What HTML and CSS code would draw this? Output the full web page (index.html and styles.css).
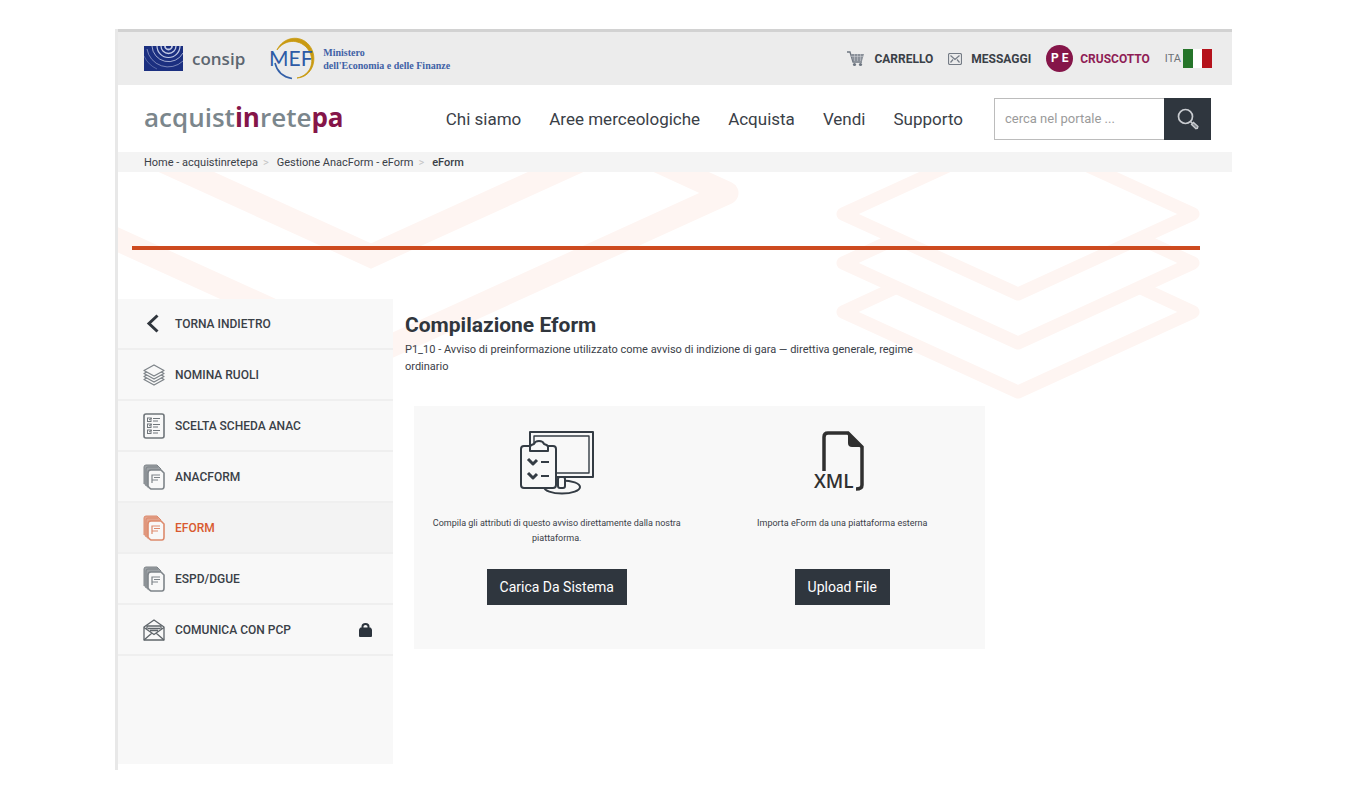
FILE: index.html
```html
<!DOCTYPE html>
<html lang="it">
<head>
    <meta charset="UTF-8">
    <meta name="viewport" content="width=device-width, initial-scale=1.0">
    <title>acquistinretepa - Compilazione Eform</title>
    <link rel="stylesheet" href="styles.css">
</head>
<body>
    <!-- simboli condivisi -->
    <svg class="sprite" width="0" height="0" aria-hidden="true">
        <symbol id="ico-form" viewBox="0 0 22 26">
            <path d="M1 20V3q0-2 2-2h11l4 4v2H8Q5 7 5 10v14z" fill="currentColor" opacity=".75"/>
            <path d="M1 20V3q0-2 2-2h11l4 4M3 22V5q0-2 2-2h10" fill="none" stroke="currentColor"/>
            <path d="M8 6h10l3 3v13q0 3-2 3H8q-2-1-3-3V9q0-3 3-3z" fill="#f8f8f8" stroke="currentColor" stroke-width="1.6"/>
            <path d="M9 19v-8h8M11 13.500h6M9 16h6" fill="none" stroke="currentColor" stroke-width="1.200"/>
        </symbol>
    </svg>

    <div class="page">
        <div class="topbar">
            <div class="brands">
                <a href="#" class="consip">
                    <svg width="39" height="25" viewBox="0 0 39 25" aria-hidden="true">
                        <rect width="39" height="25" fill="#1b2f80"/>
                        <g fill="none" stroke="#c3cbe6">
                            <path d="M21 0a3.500 3.500 0 0 0 7 0" stroke-width="1.800"/>
                            <path d="M17 0a7.500 7.500 0 0 0 15 0" stroke-width="1.300"/>
                            <path d="M13 0a11.500 11.500 0 0 0 23 0" stroke-width="1.200"/>
                            <path d="M8 0a16.500 16.500 0 0 0 31 7" stroke-width="1" opacity=".8"/>
                            <path d="M3 3a21.500 21.500 0 0 0 36 12" stroke-width=".8" opacity=".7"/>
                            <path d="M0 10a26 26 0 0 0 13 13" stroke-width=".7" opacity=".5"/>
                        </g>
                    </svg>
                    <span>consip</span>
                </a>
                <a href="#" class="mef">
                    <svg width="48" height="44" viewBox="0 0 48 44" aria-hidden="true">
                        <path d="M8 13C14 0 31-3 40 8c10 12 4 32-12 33 15-3 19-19 10-30C29 1 15 3 8 13z" fill="#c99a12" stroke="#c99a12" stroke-width=".8"/>
                        <path d="M6 26q3 13 17 15.500" fill="none" stroke="#3460a8" stroke-width="1.600"/>
                        <text x="0" y="29" class="mef-text">MEF</text>
                    </svg>
                    <span>Ministero<br>dell'Economia e delle Finanze</span>
                </a>
            </div>
            <div class="tools">
                <a href="#">
                    <svg width="18" height="16" viewBox="0 0 18 16" aria-hidden="true">
                        <path d="M0 1h3l3 10h9" fill="none" stroke="#6d7580" stroke-width="1.300"/>
                        <path d="M4 3h13l-2 7H6z" fill="#8b919a"/>
                        <path d="M7.500 3v7M10.500 3v7M13.500 3v7M4 5.500h12" stroke="#d0d3d8" stroke-width=".5"/>
                        <circle cx="7.500" cy="13.500" r="1.600" fill="#6d7580"/>
                        <circle cx="13.500" cy="13.500" r="1.600" fill="#6d7580"/>
                    </svg>
                    CARRELLO
                </a>
                <a href="#">
                    <svg width="14" height="12" viewBox="0 0 14 12" aria-hidden="true">
                        <g fill="none" stroke="#757c86" stroke-width="1.200">
                            <rect x=".5" y=".5" width="13" height="11" rx="1.500"/>
                            <path d="M2.500 2.500L7 6.500l4.500-4M2.500 9.500l2.500-3M11.500 9.500L9 6.500"/>
                        </g>
                    </svg>
                    MESSAGGI
                </a>
                <a href="#" class="user"><span class="avatar">P E</span> CRUSCOTTO</a>
                <a href="#" class="lang">ITA
                    <svg width="29" height="19" viewBox="0 0 29 19" aria-hidden="true">
                        <rect width="29" height="19" fill="#fff"/>
                        <rect width="10" height="19" fill="#26752a"/>
                        <rect x="19" width="10" height="19" fill="#b5131c"/>
                    </svg>
                </a>
            </div>
        </div>

        <header class="header">
            <a href="#" class="logo">acquist<b>in</b>rete<b>pa</b></a>
            <nav class="nav">
                <a href="#">Chi siamo</a>
                <a href="#">Aree merceologiche</a>
                <a href="#">Acquista</a>
                <a href="#">Vendi</a>
                <a href="#">Supporto</a>
            </nav>
            <form class="search">
                <input type="text" placeholder="cerca nel portale ..." aria-label="cerca nel portale">
                <button type="button" aria-label="Cerca">
                    <svg width="24" height="24" viewBox="0 0 24 24" fill="none" stroke="#c9ccd0" aria-hidden="true">
                        <circle cx="9.500" cy="9.500" r="7" stroke-width="1.700"/>
                        <path d="M14.500 14.500l2 2" stroke-width="1.700"/>
                        <path d="M15.500 17.500l2-2 4.500 4q0 2-2 2.200z" stroke-width="1.300" fill="#858a90"/>
                    </svg>
                </button>
            </form>
        </header>

        <nav class="breadcrumb">
            <a href="#">Home - acquistinretepa</a><i>&gt;</i>
            <a href="#">Gestione AnacForm - eForm</a><i>&gt;</i>
            <span>eForm</span>
        </nav>

        <main class="main">
            <!-- livelli decorativi dietro al contenuto -->
            <svg class="layers" viewBox="0 0 1114 240" preserveAspectRatio="xMinYMin slice" fill="none" stroke="#fef5f2" aria-hidden="true">
                <g stroke-width="23">
                    <path d="M-103 -78L253 84 609 -78"/>
                    <path d="M-103 21L253 183 609 21 500 -29" stroke-linejoin="round"/>
                </g>
                <g stroke-width="13" stroke-linejoin="round">
                    <path d="M900 -38L725 42 900 122 1075 42z"/>
                    <path d="M779 66L725 91 900 171 1075 91 1021 66"/>
                    <path d="M779 115L725 140 900 220 1075 140 1021 115"/>
                </g>
            </svg>

            <hr class="rule">

            <div class="columns">
                <aside class="sidebar">
                    <a href="#">
                        <svg width="22" height="22" viewBox="0 0 22 22" aria-hidden="true"><path d="M14.500 2.500L6 10.500l8.500 8" fill="none" stroke="#30363d" stroke-width="3"/></svg>
                        TORNA INDIETRO
                    </a>
                    <a href="#">
                        <svg width="22" height="22" viewBox="0 0 22 22" fill="#f8f8f8" stroke="#7e8489" stroke-width="1.300" stroke-linejoin="round" aria-hidden="true">
                            <path d="M11 10l10 5.500L11 21 1 15.500z"/>
                            <path d="M11 7l10 5.500L11 18 1 12.500z"/>
                            <path d="M11 4l10 5.500L11 15 1 9.500z"/>
                            <path d="M11 1l10 5.500L11 12 1 6.500z"/>
                        </svg>
                        NOMINA RUOLI
                    </a>
                    <a href="#">
                        <svg width="22" height="26" viewBox="0 0 22 26" fill="none" stroke="#6f757a" aria-hidden="true">
                            <rect x="1" y="1" width="20" height="24" rx="2" stroke-width="1.600"/>
                            <rect x="4.500" y="5" width="3.500" height="3.500"/>
                            <rect x="4.500" y="11" width="3.500" height="3.500"/>
                            <rect x="4.500" y="17" width="3.500" height="3.500"/>
                            <path d="M10 5.500h7M10 8h5M10 11.500h7M10 14h5M10 17.500h7M10 20h5M6 7l3-2M6 13l3-2M6 19l3-2"/>
                        </svg>
                        SCELTA SCHEDA ANAC
                    </a>
                    <a href="#"><svg class="grey" width="22" height="26" aria-hidden="true"><use href="#ico-form"/></svg>ANACFORM</a>
                    <a href="#" class="active"><svg width="22" height="26" aria-hidden="true"><use href="#ico-form"/></svg>EFORM</a>
                    <a href="#"><svg class="grey" width="22" height="26" aria-hidden="true"><use href="#ico-form"/></svg>ESPD/DGUE</a>
                    <a href="#">
                        <svg width="22" height="22" viewBox="0 0 22 22" fill="none" stroke="#5f656a" stroke-width="1.300" stroke-linejoin="round" aria-hidden="true">
                            <path d="M1 8l10-7 10 7v13H1z"/>
                            <path d="M4 10V7h14v3M1 8.500l10 7 10-7M1 21l8-7M21 21l-8-7M5 9.500h12M7 11.500h8"/>
                        </svg>
                        COMUNICA CON PCP
                        <svg class="lock" width="13" height="14" viewBox="0 0 13 14" aria-hidden="true">
                            <path d="M3.500 6V3.500q0-2.500 3-2.500t3 2.500V6" fill="none" stroke="#2c343d" stroke-width="2"/>
                            <path d="M1.500 4.500h10q1.500 1 1.500 2.500v6q0 1-1 1H1q-1 0-1-1V7q0-1.500 1.500-2.500z" fill="#2c343d"/>
                        </svg>
                    </a>
                </aside>

                <section class="content">
                    <h1>Compilazione Eform</h1>
                    <p class="desc">P1_10 - Avviso di preinformazione utilizzato come avviso di indizione di gara — direttiva generale, regime ordinario</p>

                    <div class="options">
                        <div class="option">
                            <svg width="74" height="66" viewBox="0 0 74 66" fill="#f8f8f8" stroke="#343c44" stroke-width="2" stroke-linejoin="round" aria-hidden="true">
                                <ellipse cx="42" cy="57" rx="18" ry="6.500"/>
                                <path d="M10 2h63v45H10z"/>
                                <path d="M14 6h55v37H14z" stroke-width="1.400"/>
                                <rect x="38" y="47" width="7" height="11" rx="2"/>
                                <rect x="1" y="16" width="35" height="42" rx="3"/>
                                <path d="M10 21v-4q0-2 4-3 1-3 5-3t5 3q4 1 4 3v4z"/>
                                <g fill="none">
                                    <path d="M8 29l5 5 4-4M8 43l5 5 4-4" stroke-width="3"/>
                                    <path d="M21 32h8M21 46h8"/>
                                </g>
                            </svg>
                            <p>Compila gli attributi di questo avviso direttamente dalla nostra piattaforma.</p>
                            <button type="button">Carica Da Sistema</button>
                        </div>
                        <div class="option">
                            <svg width="58" height="66" viewBox="0 0 58 66" aria-hidden="true">
                                <path d="M11 41V7q0-4 4-4h20l14 14v38q0 4-6 4" fill="none" stroke="#303030" stroke-width="3.500"/>
                                <path d="M35 2l15 15H39q-4 0-4-4z" fill="#303030"/>
                                <text x="1" y="58" class="xml-text">XML</text>
                            </svg>
                            <p>Importa eForm da una piattaforma esterna</p>
                            <button type="button">Upload File</button>
                        </div>
                    </div>
                </section>
            </div>
        </main>
    </div>
</body>
</html>
```

FILE: styles.css
```css
* {
    box-sizing: border-box;
}

body {
    margin: 0;
    padding: 29px 115px 28px;
    background-color: #fff;
    color: #3a4047;
    font-family: Roboto, "Liberation Sans", sans-serif;
}

a {
    color: inherit;
    text-decoration: none;
}

svg {
    display: block;
    flex: none;
}

.sprite {
    position: absolute;
}

.page {
    border-left: 3px solid #e8e8e8;
}

/* barra superiore */
.topbar {
    display: flex;
    justify-content: space-between;
    align-items: center;
    height: 56px;
    padding: 0 20px 0 26px;
    border-top: 3px solid #d2d2d2;
    background-color: #ececec;
}

.brands,
.brands a,
.tools,
.tools a {
    display: flex;
    align-items: center;
}

.brands {
    gap: 24px;
}

.consip {
    gap: 9px;
    color: #5c6670;
    font-family: "Open Sans", sans-serif;
    font-size: 17px;
    font-weight: 600;
}

.mef {
    gap: 6px;
    color: #3f62a6;
    font-family: "Liberation Serif", serif;
    font-size: 10px;
    font-weight: bold;
    line-height: 13px;
}

.mef-text {
    fill: #2d5aa6;
    font-family: Lato, sans-serif;
    font-size: 21px;
    font-weight: normal;
}

.tools {
    gap: 15px;
    font-size: 12px;
    font-weight: bold;
}

.tools a {
    gap: 9px;
}

.tools .user {
    gap: 7px;
    color: #8f1d55;
}

.avatar {
    width: 27px;
    height: 27px;
    border-radius: 50%;
    background-color: #851549;
    color: #fff;
    line-height: 27px;
    text-align: center;
}

.tools .lang {
    gap: 2px;
    color: #6d7277;
    font-size: 11px;
    font-weight: normal;
}

/* intestazione */
.header {
    display: flex;
    align-items: center;
    height: 67px;
    padding: 0 21px 0 26px;
}

.logo {
    padding-bottom: 4px;
    color: #7b868c;
    font-family: "Open Sans", sans-serif;
    font-size: 26px;
    font-weight: 600;
    line-height: 30px;
}

.logo b {
    color: #851549;
    font-weight: bold;
}

.nav {
    display: flex;
    gap: 28px;
    margin-left: auto;
    font-size: 17px;
}

.search {
    display: flex;
    height: 42px;
    margin-left: 31px;
}

.search input {
    width: 170px;
    padding: 0 10px;
    border: 1px solid #bcbcbc;
    border-right: 0;
    border-radius: 0;
    font-family: inherit;
    font-size: 13px;
}

.search input::placeholder {
    color: #9b9b9b;
}

.search button {
    display: flex;
    justify-content: center;
    align-items: center;
    width: 47px;
    padding: 0;
    border: 0;
    background-color: #2f363e;
}

.breadcrumb {
    display: flex;
    align-items: center;
    height: 20px;
    padding: 0 26px;
    background-color: #f4f4f4;
    font-size: 11px;
}

.breadcrumb i {
    margin: 0 8px 0 5px;
    color: #c4c4c4;
    font-style: normal;
}

.breadcrumb span {
    font-weight: 500;
}

/* corpo */
.main {
    position: relative;
    padding: 74px 0 6px;
}

.layers {
    position: absolute;
    top: 0;
    left: 0;
    z-index: -1;
    width: 100%;
    height: 240px;
}

.rule {
    height: 4px;
    margin: 0 32px 0 14px;
    border: 0;
    background-color: #cd4a1f;
}

.columns {
    display: flex;
    margin-top: 49px;
}

.sidebar {
    flex: none;
    width: 275px;
    min-height: 465px;
    background-color: #f8f8f8;
    font-size: 12px;
    font-weight: 500;
}

.sidebar a {
    display: flex;
    align-items: center;
    gap: 10px;
    height: 51px;
    padding: 0 21px 0 25px;
    border-bottom: 2px solid #efefef;
}

.sidebar .grey {
    color: #7e8489;
}

.sidebar .active {
    background-color: #f3f3f3;
    color: #d9592f;
}

.sidebar .active svg {
    color: #dd8a6c;
}

.sidebar .lock {
    margin-left: auto;
}

.content {
    flex: 1;
    max-width: 592px;
    padding: 13px 0 0 12px;
}

h1 {
    margin: 0;
    color: #30363d;
    font-size: 21px;
    font-weight: bold;
    line-height: 26px;
}

.desc {
    max-width: 530px;
    margin: 3px 0 0;
    font-size: 11px;
    line-height: 17px;
}

.options {
    display: grid;
    grid-template-columns: 1fr 1fr;
    margin: 31px 0 0 9px;
    padding: 24px 0 44px;
    background-color: #f8f8f8;
}

.option {
    display: flex;
    flex-direction: column;
    align-items: center;
    padding: 0 12px;
    text-align: center;
}

.option p {
    min-height: 30px;
    margin: 20px 0 23px;
    font-size: 9px;
    line-height: 15px;
}

.option button {
    height: 36px;
    padding: 0 13px;
    border: 0;
    background-color: #2f363e;
    color: #fff;
    font-family: inherit;
    font-size: 14px;
}

.xml-text {
    fill: #303030;
    font-family: "Open Sans", sans-serif;
    font-size: 19px;
    font-weight: 600;
}
```
